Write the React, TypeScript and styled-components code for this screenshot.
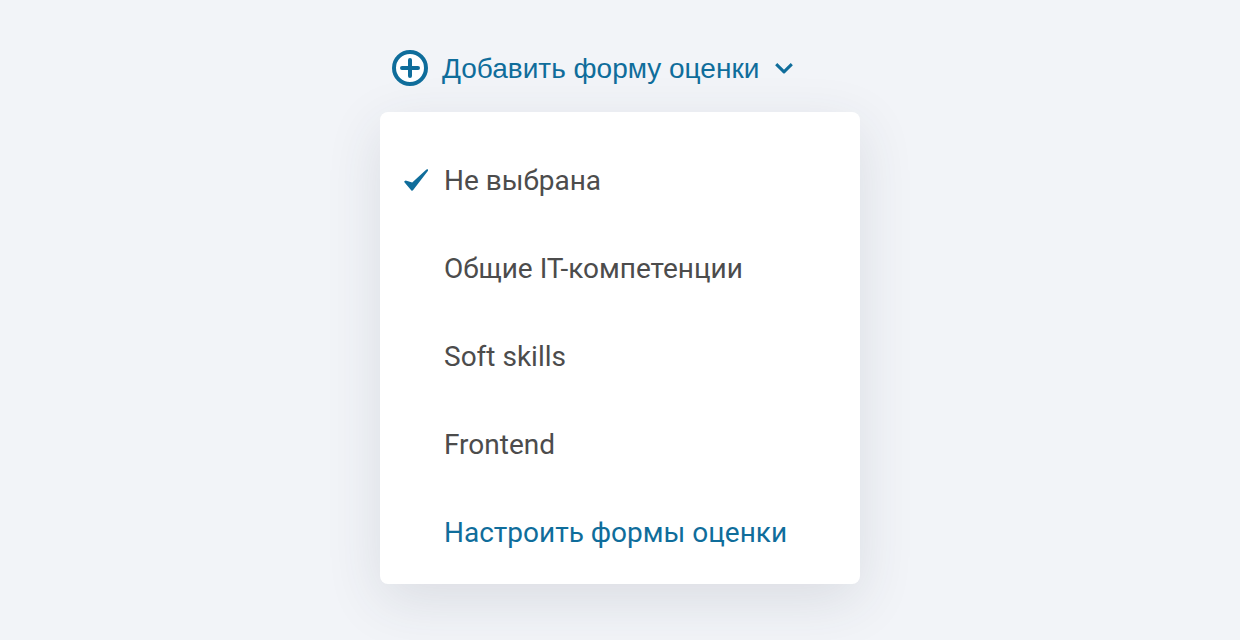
import { FC } from 'react';
import styled, { createGlobalStyle } from 'styled-components';

const GlobalStyle = createGlobalStyle`
    body {
        margin: 0;
        background-color: #f2f4f8;
    }
`;

const StyledPage = styled.main`
    box-sizing: border-box;
    width: 1240px;
    height: 640px;
    padding: 44px 380px 0;
    overflow: hidden;
    background-color: #f2f4f8;
`;

const StyledTrigger = styled.button`
    display: flex;
    align-items: center;
    height: 48px;
    margin: 0 0 20px;
    padding: 0 12px;
    border: none;
    background: none;
    color: #0f6d9b;
    font: 28px/40px 'Liberation Sans', Arial, sans-serif;
    white-space: nowrap;
    cursor: pointer;
`;

const StyledTriggerText = styled.span`
    margin: 0 15px 0 14px;
    padding-top: 2px;
`;

const StyledMenu = styled.ul`
    box-sizing: border-box;
    height: 472px;
    margin: 0;
    padding: 24px 0 8px;
    border-radius: 8px;
    background-color: white;
    box-shadow: 0 16px 56px rgba(50, 60, 75, 0.12);
    list-style: none;
`;

const StyledItem = styled.li<{ $accent?: boolean }>`
    display: grid;
    grid-template-columns: 24px 1fr;
    column-gap: 16px;
    align-items: center;
    height: 88px;
    padding: 0 24px;
    color: ${({ $accent }) => ($accent ? '#0f6d9b' : '#4c4c4c')};
    font: 28px/40px Roboto, sans-serif;
    white-space: nowrap;
`;

const StyledMark = styled.span`
    display: flex;
    color: #0f6d9b;
`;

const StyledName = styled.span`
    padding-top: 2px;
`;

const PlusIcon: FC = () => (
    <svg width="36" height="36" viewBox="0 0 36 36" fill="none">
        <circle
            cx="18"
            cy="18"
            r="16"
            fill="white"
            stroke="currentColor"
            strokeWidth="4"
        />
        <path
            d="M18 10v16M10 18h16"
            stroke="currentColor"
            strokeWidth="4"
            strokeLinecap="round"
        />
    </svg>
);

const ChevronIcon: FC = () => (
    <svg width="20" height="12" viewBox="0 0 20 12" fill="none">
        <path
            d="M2.2 2.1L10 9.9l7.8-7.8"
            stroke="currentColor"
            strokeWidth="3"
            strokeLinejoin="round"
        />
    </svg>
);

const CheckIcon: FC = () => (
    <svg width="24" height="24" viewBox="0 0 24 24">
        <path
            d="M0 13.8L1.6 12.5 8.2 14.4 22.4 1.5 24 1.2V2.8L8.8 22.4 7.6 22.8z"
            fill="currentColor"
        />
    </svg>
);

const forms = ['Не выбрана', 'Общие IT-компетенции', 'Soft skills', 'Frontend'];

const App: FC = () => (
    <>
        <GlobalStyle />
        <StyledPage>
            <StyledTrigger type="button">
                <PlusIcon />
                <StyledTriggerText>Добавить форму оценки</StyledTriggerText>
                <ChevronIcon />
            </StyledTrigger>
            <StyledMenu>
                {forms.map((form, index) => (
                    <StyledItem key={form}>
                        <StyledMark>{index === 0 && <CheckIcon />}</StyledMark>
                        <StyledName>{form}</StyledName>
                    </StyledItem>
                ))}
                <StyledItem $accent>
                    <StyledMark />
                    <StyledName>Настроить формы оценки</StyledName>
                </StyledItem>
            </StyledMenu>
        </StyledPage>
    </>
);

export default App;
